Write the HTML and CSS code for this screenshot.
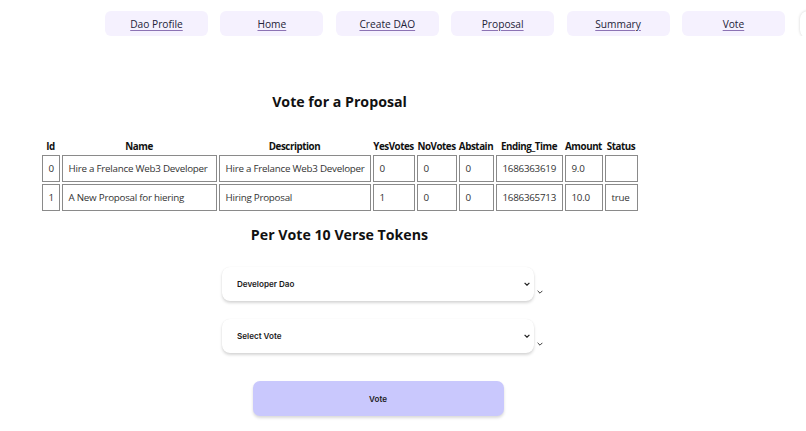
FILE: index.html
```html
<!DOCTYPE html>
<html lang="en">
<head>
<meta charset="utf-8">
<title>Vote</title>
<link rel="stylesheet" href="styles.css">
</head>
<body>
<nav class="nav">
  <a class="nav-item" href="#">Dao Profile</a>
  <a class="nav-item" href="#">Home</a>
  <a class="nav-item" href="#">Create DAO</a>
  <a class="nav-item" href="#">Proposal</a>
  <a class="nav-item" href="#">Summary</a>
  <a class="nav-item" href="#">Vote</a>
  <span class="nav-extra"></span>
</nav>
<main class="main">
  <h2 class="title">Vote for a Proposal</h2>
  <table class="proposals">
    <thead>
      <tr>
        <th class="c-id">Id</th>
        <th class="c-name">Name</th>
        <th class="c-desc">Description</th>
        <th class="c-yes">YesVotes</th>
        <th class="c-no">NoVotes</th>
        <th class="c-abs">Abstain</th>
        <th class="c-end">Ending_Time</th>
        <th class="c-amt">Amount</th>
        <th class="c-st">Status</th>
      </tr>
    </thead>
    <tbody>
      <tr>
        <td>0</td>
        <td>Hire a Frelance Web3 Developer</td>
        <td>Hire a Frelance Web3 Developer</td>
        <td>0</td>
        <td>0</td>
        <td>0</td>
        <td>1686363619</td>
        <td>9.0</td>
        <td></td>
      </tr>
      <tr>
        <td>1</td>
        <td>A New Proposal for hiering</td>
        <td>Hiring Proposal</td>
        <td>1</td>
        <td>0</td>
        <td>0</td>
        <td>1686365713</td>
        <td>10.0</td>
        <td>true</td>
      </tr>
    </tbody>
  </table>
  <h2 class="title title-tokens">Per Vote 10 Verse Tokens</h2>
  <form class="vote-form">
    <div class="field">
      <div class="select-wrap">
        <select class="select">
          <option>Developer Dao</option>
        </select>
        <svg class="chev-in" viewBox="0 0 10 6" width="6" height="4"><path d="M1 1 L5 5 L9 1" fill="none" stroke="#222" stroke-width="2"/></svg>
        <svg class="chev-out" viewBox="0 0 10 6" width="6" height="4"><path d="M1 1 L5 5 L9 1" fill="none" stroke="#333" stroke-width="1.6"/></svg>
      </div>
    </div>
    <div class="field">
      <div class="select-wrap">
        <select class="select">
          <option>Select Vote</option>
        </select>
        <svg class="chev-in" viewBox="0 0 10 6" width="6" height="4"><path d="M1 1 L5 5 L9 1" fill="none" stroke="#222" stroke-width="2"/></svg>
        <svg class="chev-out" viewBox="0 0 10 6" width="6" height="4"><path d="M1 1 L5 5 L9 1" fill="none" stroke="#333" stroke-width="1.6"/></svg>
      </div>
    </div>
    <div class="field field-btn">
      <button type="button" class="vote-btn">Vote</button>
    </div>
  </form>
</main>
</body>
</html>
```

FILE: styles.css
```css
* { box-sizing: border-box; }

html, body {
  margin: 0;
  padding: 0;
  background: #ffffff;
  overflow: hidden;
}

body {
  font-family: "Open Sans", "Noto Sans", sans-serif;
  color: #111;
  width: 806px;
  height: 431px;
}

.nav {
  display: flex;
  gap: 12.4px;
  padding: 11px 0 0 105px;
  height: 36px;
  overflow: hidden;
  white-space: nowrap;
}

.nav-item {
  flex: 0 0 103px;
  height: 25px;
  border-radius: 6px;
  background: #f5f1fe;
  display: flex;
  align-items: center;
  justify-content: center;
  font-size: 10.2px;
  color: #232338;
  text-decoration: underline;
  text-decoration-color: #8c73b4;
  text-underline-offset: 2px;
}

.nav-extra {
  flex: 0 0 103px;
  height: 27px;
  margin-left: 3px;
  border-radius: 8px;
  background: #fff;
  box-shadow: 0 0 3px rgba(0, 0, 0, 0.18);
}

.main {
  width: 663px;
  margin-left: 8px;
}

.title {
  margin: 56px 0 0;
  font-size: 14.2px;
  line-height: 20px;
  font-weight: 700;
  text-align: center;
  color: #111;
}

.proposals {
  margin: 26px auto 0;
  width: 600px;
  table-layout: fixed;
  border-collapse: separate;
  border-spacing: 2px;
  font-size: 9.8px;
  color: #333;
}

.proposals th {
  padding: 0;
  line-height: 13px;
  font-weight: 700;
  font-size: 9.8px;
  color: #111;
  white-space: nowrap;
  text-align: center;
  letter-spacing: -0.45px;
}

.proposals td {
  border: 1px solid #8a8a8a;
  padding: 5px 4px 5px 6px;
  line-height: 15px;
  white-space: nowrap;
  overflow: hidden;
  letter-spacing: -0.25px;
}

.c-id { width: 18px; }
.c-name { width: 155px; }
.c-desc { width: 152px; }
.c-yes { width: 42px; }
.c-no { width: 40px; }
.c-abs { width: 35px; }
.c-end { width: 67px; }
.c-amt { width: 38px; }
.c-st { width: 33px; }

.title-tokens {
  margin-top: 12px;
}

.vote-form {
  padding-left: 77px;
  margin-top: 22px;
  display: flex;
  flex-direction: column;
  align-items: center;
  gap: 18px;
}

.field-btn {
  margin-top: 10px;
}

.select-wrap {
  position: relative;
  width: 312px;
  height: 34px;
}

.select {
  appearance: none;
  -webkit-appearance: none;
  width: 312px;
  height: 34px;
  border: none;
  border-radius: 8px;
  background: #fff;
  box-shadow: 0 2px 3px rgba(0, 0, 0, 0.16), 0 0 1px rgba(0, 0, 0, 0.08);
  padding: 0 15px;
  font-family: Inter, "Noto Sans", sans-serif;
  font-size: 8.1px;
  font-weight: 600;
  color: #1a1a1a;
  outline: none;
}

.chev-in {
  position: absolute;
  right: 4px;
  top: 15px;
}

.chev-out {
  position: absolute;
  right: -9px;
  top: 23px;
}

.vote-btn {
  width: 251px;
  height: 35px;
  border: none;
  border-radius: 7px;
  background: #c9c8fd;
  box-shadow: 0 2px 3px rgba(0, 0, 0, 0.15);
  font-family: Inter, "Noto Sans", sans-serif;
  font-size: 8.1px;
  font-weight: 600;
  color: #1a1a1a;
}
```
